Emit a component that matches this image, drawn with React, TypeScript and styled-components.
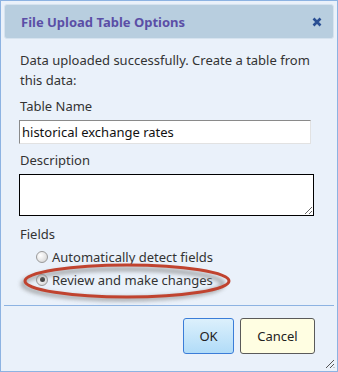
import styled, { createGlobalStyle } from 'styled-components';

const GlobalStyle = createGlobalStyle`
  html, body {
    margin: 0;
    padding: 0;
    background: #ffffff;
  }
  * {
    box-sizing: border-box;
  }
`;

const RadioOption = ({ label, checked }: { label: string; checked?: boolean }): JSX.Element => (
  <OptionRow>
    <RadioDot checked={checked} />
    <OptionLabel>{label}</OptionLabel>
  </OptionRow>
);

export default function App(): JSX.Element {
  return (
    <>
      <GlobalStyle />
      <Dialog>
        <TitleBar>
          <Title>File Upload Table Options</Title>
          <CloseIcon viewBox="0 0 10 10">
            <path d="M1.5 1.5 L8.5 8.5 M8.5 1.5 L1.5 8.5" stroke="#2a4f93" strokeWidth="2.6" strokeLinecap="butt" />
          </CloseIcon>
        </TitleBar>
        <Body>
          <Intro>Data uploaded successfully. Create a table from this data:</Intro>
          <Label>Table Name</Label>
          <TextInput defaultValue="historical exchange rates" />
          <Label>Description</Label>
          <TextArea />
          <Label $top={8}>Fields</Label>
          <Options>
            <RadioOption label="Automatically detect fields" />
            <RadioOption label="Review and make changes" checked />
            <Highlight viewBox="0 0 212 40">
              <defs>
                <filter id="soft" x="-20%" y="-40%" width="140%" height="180%">
                  <feGaussianBlur stdDeviation="2" />
                </filter>
              </defs>
              <ellipse cx="103" cy="22" rx="100" ry="15" fill="none" stroke="#8a8a8a" strokeWidth="4" filter="url(#soft)" opacity="0.8" />
              <ellipse cx="107" cy="19" rx="102" ry="16" fill="none" stroke="#c0432f" strokeWidth="3" />
            </Highlight>
          </Options>
        </Body>
        <Divider />
        <Footer>
          <OkButton>OK</OkButton>
          <CancelButton>Cancel</CancelButton>
        </Footer>
        <Grip viewBox="0 0 12 12">
          <path d="M11 3 L3 11 M11 7 L7 11 M11 10.5 L10.5 11" stroke="#555" strokeWidth="1" />
        </Grip>
      </Dialog>
    </>
  );
}

const Dialog = styled.div`
  position: relative;
  width: 338px;
  height: 372px;
  border: 1px solid #8db3e2;
  background: #eaf1fa;
  padding: 3px;
  display: flex;
  flex-direction: column;
  font-family: 'Noto Sans', 'Open Sans', sans-serif;
  color: #333333;
`;

const TitleBar = styled.div`
  height: 35px;
  display: flex;
  align-items: center;
  justify-content: space-between;
  padding: 0 11px 0 16px;
  background: #b8cedf;
  border: 1px solid #d6e3ef;
  border-radius: 3px;
`;

const Title = styled.span`
  font-size: 13px;
  font-weight: bold;
  color: #5b4ea6;
`;

const CloseIcon = styled.svg`
  width: 10px;
  height: 10px;
`;

const Body = styled.div`
  padding: 11px 16px 0 16px;
  display: flex;
  flex-direction: column;
`;

const Intro = styled.p`
  margin: 0;
  font-size: 13px;
  line-height: 20px;
  padding-right: 8px;
`;

const Label = styled.div<{ $top?: number }>`
  font-size: 13px;
  line-height: 20px;
  margin-top: ${(p) => p.$top ?? 6}px;
  margin-bottom: 4px;
`;

const TextInput = styled.input`
  width: 292px;
  height: 24px;
  margin-left: -1px;
  padding: 0 2px;
  font-family: inherit;
  font-size: 13px;
  color: #111;
  background: #ffffff;
  border-style: solid;
  border-width: 1px;
  border-color: #8a8a8a #e2e2e2 #e2e2e2 #8a8a8a;
  outline: none;
`;

const TextArea = styled.textarea`
  width: 295px;
  height: 42px;
  margin-left: -1px;
  border: 1px solid #000;
  background: #ffffff;
  font-family: inherit;
  font-size: 13px;
  resize: vertical;
`;

const Options = styled.div`
  position: relative;
  display: flex;
  flex-direction: column;
  padding-left: 16px;
  margin-top: -3px;
`;

const OptionRow = styled.label`
  display: flex;
  align-items: center;
  gap: 4px;
  height: 23px;
  font-size: 13px;
`;

const RadioDot = styled.span<{ checked?: boolean }>`
  position: relative;
  width: 12px;
  height: 12px;
  border-radius: 50%;
  border: 1px solid #9a9a9a;
  background: radial-gradient(circle at 35% 35%, #ffffff 0%, #e6e6e6 55%, #c8c8c8 100%);
  &::after {
    content: '';
    display: ${(p) => (p.checked ? 'block' : 'none')};
    position: absolute;
    left: 2.5px;
    top: 2.5px;
    width: 5px;
    height: 5px;
    border-radius: 50%;
    background: #444;
  }
`;

const OptionLabel = styled.span`
  color: #333;
`;

const Highlight = styled.svg`
  position: absolute;
  left: 0;
  top: 17px;
  width: 212px;
  height: 40px;
  overflow: visible;
  pointer-events: none;
`;

const Divider = styled.div`
  margin-top: auto;
  height: 1px;
  background: #8db3e2;
`;

const Footer = styled.div`
  height: 62px;
  display: flex;
  justify-content: flex-end;
  align-items: flex-start;
  gap: 6px;
  padding: 12px 19px 0 0;
`;

const BaseButton = styled.button`
  height: 36px;
  font-family: inherit;
  font-size: 13px;
  color: #222;
  border-radius: 3px;
  cursor: pointer;
`;

const OkButton = styled(BaseButton)`
  width: 51px;
  border: 1px solid #3b7dd8;
  background: linear-gradient(#dcf0fc, #b1dcf8);
`;

const CancelButton = styled(BaseButton)`
  width: 75px;
  border: 1px solid #5a5a5a;
  background: #fffee2;
`;

const Grip = styled.svg`
  position: absolute;
  right: 2px;
  bottom: 2px;
  width: 12px;
  height: 12px;
`;
